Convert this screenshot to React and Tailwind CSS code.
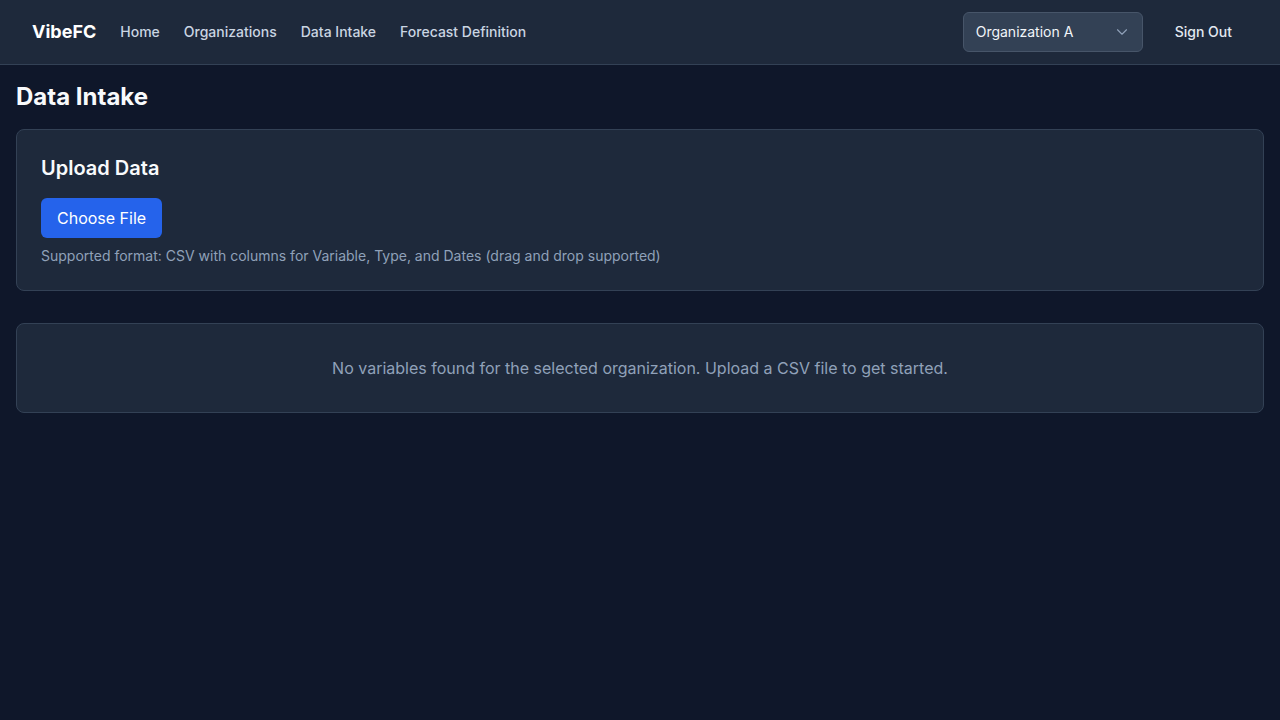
import { ChevronDown } from 'lucide-react'

const links = ['Home', 'Organizations', 'Data Intake', 'Forecast Definition']

export default function App() {
  return (
    <div className="min-h-screen bg-[#0f172a] text-slate-100" style={{ fontFamily: 'Inter, "Noto Sans", sans-serif' }}>
      <nav className="h-[65px] bg-[#1e293b] border-b border-[#334155] px-8 flex items-center justify-between">
        <div className="flex items-center gap-6">
          <span className="text-lg font-bold text-white">VibeFC</span>
          {links.map((l) => (
            <a key={l} className="text-sm font-medium text-slate-300">
              {l}
            </a>
          ))}
        </div>
        <div className="flex items-center gap-4">
          <div className="w-[180px] h-10 rounded-md bg-[#334155] border border-[#475569] pl-3 pr-[11px] flex items-center justify-between">
            <span className="text-sm text-slate-100">Organization A</span>
            <ChevronDown className="w-[18px] h-[18px] text-slate-400" strokeWidth={1.5} />
          </div>
          <button className="px-4 py-2 text-sm font-medium text-slate-200">Sign Out</button>
        </div>
      </nav>

      <main className="p-4">
        <h1 className="text-2xl font-bold text-slate-50 mb-4">Data Intake</h1>

        <div className="bg-[#1e293b] border border-[#334155] rounded-lg p-6 mb-8">
          <h2 className="text-xl font-semibold text-slate-50 mb-4">Upload Data</h2>
          <button className="h-10 px-4 rounded-md bg-[#2563eb] text-white text-base">Choose File</button>
          <p className="mt-2 text-sm text-slate-400">
            Supported format: CSV with columns for Variable, Type, and Dates (drag and drop supported)
          </p>
        </div>

        <div className="bg-[#1e293b] border border-[#334155] rounded-lg py-8 text-center">
          <p className="text-base text-slate-400">
            No variables found for the selected organization. Upload a CSV file to get started.
          </p>
        </div>
      </main>
    </div>
  )
}
